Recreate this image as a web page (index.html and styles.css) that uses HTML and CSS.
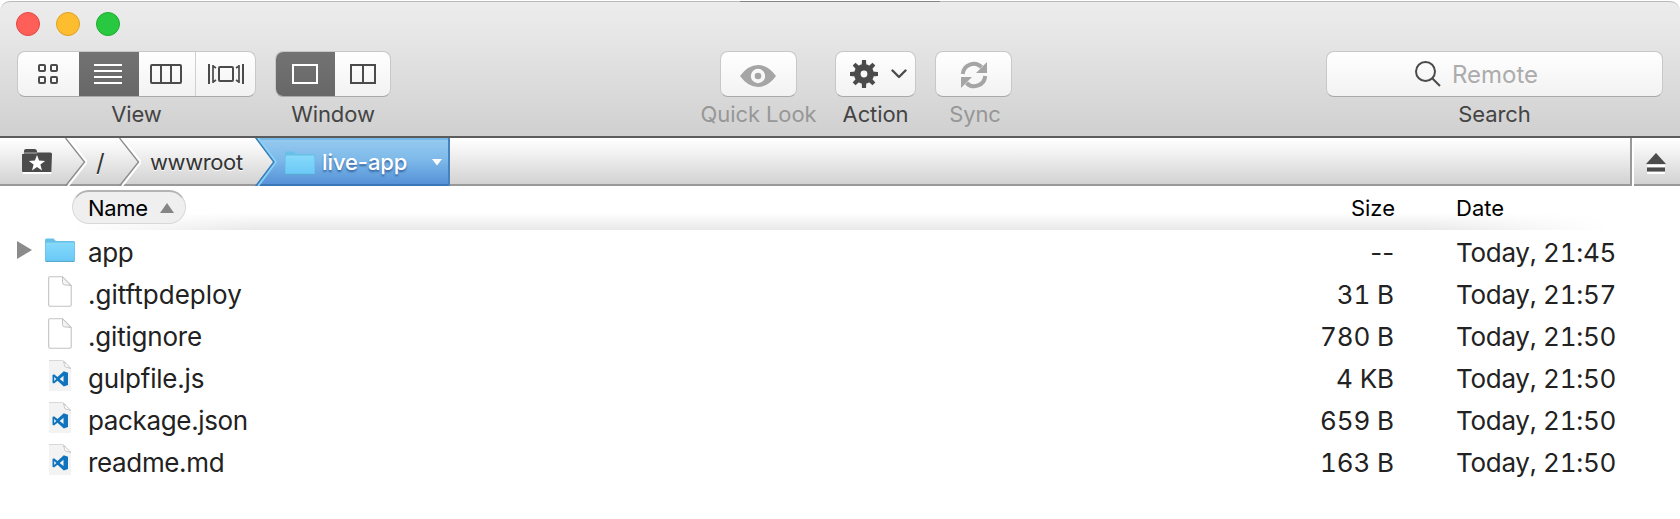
FILE: index.html
```
<!DOCTYPE html>
<html lang="en">
<head>
<meta charset="utf-8">
<title>live-app</title>
<link rel="stylesheet" href="styles.css">
</head>
<body>
<svg class="defs" width="0" height="0">
  <defs>
    <linearGradient id="folderFill" x1="0" y1="0" x2="0" y2="1"><stop offset="0" stop-color="#83d8fa"/><stop offset="1" stop-color="#6bc9f7"/></linearGradient>
    <symbol id="folder" viewBox="0 0 30 25">
      <path d="M0 23V2Q0 .5 1.500 .5H8.500L11 3H28.500Q30 3 30 4.500V23Z" fill="#67c0e8"/>
      <path d="M.7 6H29.300V22.500H.7Z" fill="url(#folderFill)"/>
      <path d="M1 5.200H29" stroke="#98e3fc"/>
      <path d="M.5 23.500H29.500" stroke="#58a9d0"/>
    </symbol>
    <symbol id="page" viewBox="0 0 24 31">
      <path d="M1.500 .7H14.500L23.200 9.500V29Q23.200 30.200 22 30.200H1.800Q.7 30.200 .7 29V1.700Q.7 .7 1.500 .7Z" fill="#fff" stroke="#c2c2c2" stroke-width="1.100"/>
      <path d="M14.500 .8V6.500Q14.500 8.500 16.500 8.800L23 9.500Z" fill="#f4f4f4" stroke="#c2c2c2"/>
    </symbol>
    <symbol id="code" viewBox="0 0 24 31">
      <path d="M1 0H15L23 8V31H1Z" fill="#f3f3f3"/>
      <path d="M1 .5H14.500L18 3" stroke="#d8d8d8" fill="none"/>
      <path d="M15.500 1.500L23 8.500L17 6.800Z" fill="#fff" stroke="#bcbcbc" stroke-width=".8"/>
      <path fill="#0f73bd" fill-rule="evenodd" d="M15.800 11.300L20 12.800V25L15.800 26.500L9.500 20.800L6 23.600L4.500 22.800V15L6 14.200L9.500 17ZM15.500 15.800L11.700 18.900L15.500 22ZM6.200 17V20.900L8.300 18.900Z"/>
    </symbol>
  </defs>
</svg>
<div class="window">
  <header class="titlebar">
    <span class="top-tab"></span>
    <div class="lights"><i class="light red"></i><i class="light amber"></i><i class="light green"></i></div>
    <div class="toolbar">
      <div class="tool">
        <div class="control view">
          <span class="seg seg-grid"><svg width="20" height="20" fill="none" stroke="#4b4b4b" stroke-width="2"><rect x="1" y="1" width="6" height="6" rx="1"/><rect x="13" y="1" width="6" height="6" rx="1"/><rect x="1" y="13" width="6" height="6" rx="1"/><rect x="13" y="13" width="6" height="6" rx="1"/></svg></span>
          <span class="seg seg-list active"><svg width="28" height="20" stroke="#fff" stroke-width="2"><path d="M0 1H28M0 7H28M0 13H28M0 19H28"/></svg></span>
          <span class="seg seg-cols"><svg width="32" height="20" fill="none" stroke="#4b4b4b" stroke-width="2"><rect x="1" y="1" width="30" height="18" rx="1"/><path d="M11 1V19M21 1V19"/></svg></span>
          <span class="seg seg-flow"><svg width="36" height="20" fill="none" stroke="#4b4b4b" stroke-width="2"><rect x="11" y="3" width="14" height="14" rx="1"/><path d="M1 0V20M35 0V20"/><path d="M5 1V19M5 2L8 4M5 18L8 16M31 1V19M31 2L28 4M31 18L28 16" stroke-width="1.700"/></svg></span>
        </div>
        <span class="label">View</span>
      </div>
      <div class="tool">
        <div class="control">
          <span class="seg seg-single active"><svg width="26" height="20" fill="none" stroke="#fff" stroke-width="2"><rect x="1" y="1" width="24" height="18"/></svg></span>
          <span class="seg seg-dual"><svg width="26" height="20" fill="none" stroke="#4b4b4b" stroke-width="2"><path d="M1 1H25V19H1ZM13 1V19"/></svg></span>
        </div>
        <span class="label">Window</span>
      </div>
      <div class="tool quick disabled">
        <div class="control btn"><svg class="eye" width="36" height="22"><path fill="#a5a5a5" fill-rule="evenodd" d="M0 11Q8 0 18 0T36 11Q28 22 18 22T0 11ZM18 3.800A7.200 7.200 0 1 0 18 18.200A7.200 7.200 0 1 0 18 3.800Z"/><circle cx="18" cy="11" r="3.300" fill="#a5a5a5"/></svg></div>
        <span class="label">Quick Look</span>
      </div>
      <div class="tool">
        <div class="control btn action">
          <svg width="28" height="28" viewBox="-14 -14 28 28"><g fill="#4b4b4b"><path id="tooth" d="M-2.400 -8L-2 -14H2L2.400 -8Z"/><use href="#tooth" transform="rotate(45)"/><use href="#tooth" transform="rotate(90)"/><use href="#tooth" transform="rotate(135)"/><use href="#tooth" transform="rotate(180)"/><use href="#tooth" transform="rotate(225)"/><use href="#tooth" transform="rotate(270)"/><use href="#tooth" transform="rotate(315)"/></g><circle r="6.700" fill="none" stroke="#4b4b4b" stroke-width="6.600"/></svg>
          <svg width="16" height="10" fill="none" stroke="#4b4b4b" stroke-width="2.400" stroke-linecap="round" stroke-linejoin="round"><path d="M1.500 1.500L8 8L14.500 1.500"/></svg>
        </div>
        <span class="label">Action</span>
      </div>
      <div class="tool disabled">
        <div class="control btn"><svg class="sync" width="28" height="28"><g id="arc"><path d="M2.800 13A11 11 0 0 1 21.500 6" fill="none" stroke="#a5a5a5" stroke-width="4"/><path d="M27 1V12H16Z" fill="#a5a5a5"/></g><use href="#arc" transform="rotate(180 14 14)"/></svg></div>
        <span class="label sync-label">Sync</span>
      </div>
      <div class="tool search">
        <div class="control field"><svg width="26" height="26" fill="none" stroke="#4b4b4b" stroke-width="2"><circle cx="10.500" cy="10.500" r="9.500"/><path d="M17.200 17.200L25 25"/></svg><span class="placeholder">Remote</span></div>
        <span class="label">Search</span>
      </div>
    </div>
  </header>
  <nav class="pathbar">
    <span class="crumb home"><svg width="30" height="25"><path d="M0 22V5H2V2Q2 0 4 0H12.500Q14.500 0 15 2V3.500H28.500Q30 3.500 30 5L29.300 23H.7Z" fill="#4b4b4b"/><path d="M1.500 4H15" stroke="#b5b5b5"/><path d="M.7 24H29.300" stroke="#fff" stroke-width="2"/><path d="M15 6L17.100 11.600L23.100 11.900L18.400 15.600L20 21.500L15 18.100L10 21.500L11.600 15.600L6.900 11.900L12.900 11.600Z" fill="#fff"/></svg></span>
    <svg class="chev" width="22" height="48" fill="none"><path d="M3 0L22 24L3 48" stroke="#fff" stroke-width="2"/><path d="M.5 0L19.500 24L.5 48" stroke="#8b8b8b" stroke-width="1.300"/></svg>
    <span class="crumb root">/</span>
    <svg class="chev" width="22" height="48" fill="none"><path d="M3 0L22 24L3 48" stroke="#fff" stroke-width="2"/><path d="M.5 0L19.500 24L.5 48" stroke="#8b8b8b" stroke-width="1.300"/></svg>
    <span class="crumb www">wwwroot</span>
    <div class="current">
      <svg class="edge" width="22" height="48" fill="none"><path d="M3 0L21 24L3 48" stroke="#86d2f7" stroke-width="2"/><path d="M.5 0L18.500 24L.5 48" stroke="#3c7db8" stroke-width="2"/></svg>
      <svg class="cur-folder" width="30" height="25"><use href="#folder"/></svg>
      <span class="cur-name">live-app</span>
      <svg width="10" height="7"><path d="M0 0H10L5 6.500Z" fill="#fff"/></svg>
    </div>
    <span class="eject"><svg width="20" height="22"><path d="M10 0L20 11H0Z" fill="#4b4b4b"/><path d="M1 13H19M1 20H19" stroke="#fff" stroke-width="2"/><path d="M1 16.500H19" stroke="#4b4b4b" stroke-width="4"/></svg></span>
  </nav>
  <div class="columns">
    <span class="pill">Name <svg width="14" height="10"><path d="M7 0L14 10H0Z" fill="#858585"/></svg></span>
    <span class="col-size">Size</span><span class="col-date">Date</span>
  </div>
  <main class="files">
    <div class="row"><svg class="tri" width="15" height="18"><path d="M0 0L15 9L0 18Z" fill="#8b8b8b"/></svg><svg class="icon fold" width="30" height="25"><use href="#folder"/></svg><span class="name">app</span><span class="size dash">--</span><span class="date">Today, 21:45</span></div>
    <div class="row"><svg class="icon" width="24" height="31"><use href="#page"/></svg><span class="name ftp">.gitftpdeploy</span><span class="size">31 B</span><span class="date">Today, 21:57</span></div>
    <div class="row"><svg class="icon" width="24" height="31"><use href="#page"/></svg><span class="name ignore">.gitignore</span><span class="size">780 B</span><span class="date">Today, 21:50</span></div>
    <div class="row"><svg class="icon" width="24" height="31"><use href="#code"/></svg><span class="name ignore">gulpfile.js</span><span class="size">4 KB</span><span class="date">Today, 21:50</span></div>
    <div class="row"><svg class="icon" width="24" height="31"><use href="#code"/></svg><span class="name">package.json</span><span class="size">659 B</span><span class="date">Today, 21:50</span></div>
    <div class="row"><svg class="icon" width="24" height="31"><use href="#code"/></svg><span class="name">readme.md</span><span class="size">163 B</span><span class="date">Today, 21:50</span></div>
  </main>
</div>
</body>
</html>
```
FILE: styles.css
```
* { box-sizing: border-box; }
html, body { margin: 0; height: 519px; overflow: hidden; background: #fff; }
body { font-family: Inter, "Liberation Sans", sans-serif; color: #222; }
svg { display: block; flex: none; }
.defs { position: absolute; }
.window { height: 519px; overflow: hidden; background: #fff; }

.titlebar {
  position: relative;
  height: 137px;
  margin-top: 1px;
  padding: 12px 17px 0 16px;
  background: linear-gradient(#ececec, #e8e8e8 20%, #d0d0d0);
  border-top: 1px solid #bababa;
  border-bottom: 2px solid #5c5c5c;
  border-radius: 10px 10px 0 0;
}
.top-tab { position: absolute; left: 740px; top: -1px; width: 200px; height: 1px; background: #858585; }
.lights { display: flex; gap: 16px; height: 24px; margin-top: -2px; }
.light { width: 24px; height: 24px; border-radius: 50%; border: 1px solid; }
.red { background: #fe5f58; border-color: #e24840; }
.amber { background: #fdbd2e; border-color: #dfa023; }
.green { background: #28c941; border-color: #1dac2c; }

.toolbar { display: flex; align-items: flex-start; padding: 15px 0 0 1px; gap: 19px; }
.tool { display: flex; flex-direction: column; align-items: center; }
.control {
  display: flex;
  height: 46px;
  border-radius: 8px;
  overflow: hidden;
  background: linear-gradient(#fff, #f2f2f2);
  border: 1px solid #c8c8c8;
  border-bottom-color: #a9a9a9;
  align-items: center;
  justify-content: center;
}
.seg { height: 46px; display: flex; align-items: center; justify-content: center; flex: none; }
.active { background: linear-gradient(#737373, #676767); }
.seg-grid { width: 61px; padding-right: 1px; }
.seg-list { width: 60px; padding-right: 2px; }
.seg-cols { width: 57px; padding-right: 2px; border-right: 1px solid #d0d0d0; }
.seg-flow { width: 59px; }
.seg-single { width: 59px; padding-right: 2px; }
.seg-dual { width: 55px; }
.label { font-size: 22px; line-height: 26px; margin-top: 4px; color: #444; white-space: nowrap; letter-spacing: -.1px; }
.disabled .label { color: #979797; }
.quick { width: 116px; margin-left: 290px; }
.quick .label { padding-left: 1px; }
.btn { width: 77px; }
.eye { margin-top: 4px; }
.sync { margin-top: 2px; }
.sync-label { padding-left: 3px; }
.action { width: 81px; gap: 13px; padding-left: 5px; }
.search { margin-left: auto; }
.field { width: 337px; gap: 11px; padding-right: 36px; }
.placeholder { font-size: 24px; color: #acacac; padding-top: 1px; }

.pathbar {
  display: flex;
  height: 48px;
  font-size: 22px;
  color: #333;
  background: linear-gradient(#fff, #f2f2f2 30%, #d0d0d0);
  box-shadow: inset 0 -2px #999;
}
.crumb { display: flex; align-items: center; height: 48px; text-shadow: 0 1px #fff; }
.home { width: 65px; padding-left: 22px; height: 46px; }
.root { width: 32px; padding-left: 9px; font-size: 24px; }
.www { width: 114px; padding-left: 9px; letter-spacing: -.4px; }
.current {
  display: flex;
  align-items: center;
  width: 195px;
  color: #fff;
  background: linear-gradient(#97cbf0, #7db9e9 45%, #538fd6);
  box-shadow: inset -2px 0 #4682c0, inset 0 -2px #3b77b7, inset 0 2px #75b8e6;
  clip-path: polygon(0 0, 100% 0, 100% 100%, 0 100%, 18px 50%);
}
.cur-folder { margin: 3px 7px 0 8px; }
.cur-name { width: 110px; text-shadow: 0 2px 2px #3766a0; font-weight: 500; letter-spacing: -.1px; }
.eject { width: 50px; margin-left: auto; padding: 15px 0 0 14px; border-left: 2px solid #999; box-shadow: inset 2px 0 #fff; }

.columns {
  position: relative;
  display: flex;
  align-items: flex-start;
  height: 44px;
  padding: 4px 0 0 72px;
  font-size: 22px;
  line-height: 36px;
  color: #000;
}
.columns::before {
  content: "";
  position: absolute;
  left: 72px; right: 72px; bottom: 0;
  height: 17px;
  background: linear-gradient(#fff, #e8e8e8);
  mask-image: linear-gradient(90deg, transparent, #000 12%, #000 88%, transparent);
}
.pill {
  position: relative;
  display: flex;
  align-items: center;
  gap: 12px;
  width: 114px;
  height: 34px;
  padding-left: 15px;
  border-radius: 17px;
  letter-spacing: -.3px;
  background: #efefef;
  border: 1px solid #d8d8d8;
  border-top: 2px solid #b4b4b4;
}
.col-size { position: relative; margin-left: auto; }
.col-date { position: relative; width: 224px; margin-left: 61px; }

.files { padding-top: 1px; }
.row { display: flex; align-items: center; height: 42px; padding-left: 48px; font-size: 26px; }
.tri { margin: 0 13px 4px -31px; }
.icon { width: 24px; margin: 0 16px 5px 0; }
.fold { width: 30px; margin: 0 13px 3px 0; }
.name { flex: 1; letter-spacing: -.35px; }
.ftp { letter-spacing: 0; }
.ignore { letter-spacing: -.2px; }
.size { text-align: right; font-variant-numeric: tabular-nums; letter-spacing: -.1px; }
.dash { font-variant-numeric: normal; }
.date { width: 224px; margin-left: 62px; font-variant-numeric: tabular-nums; letter-spacing: -.28px; }
```
